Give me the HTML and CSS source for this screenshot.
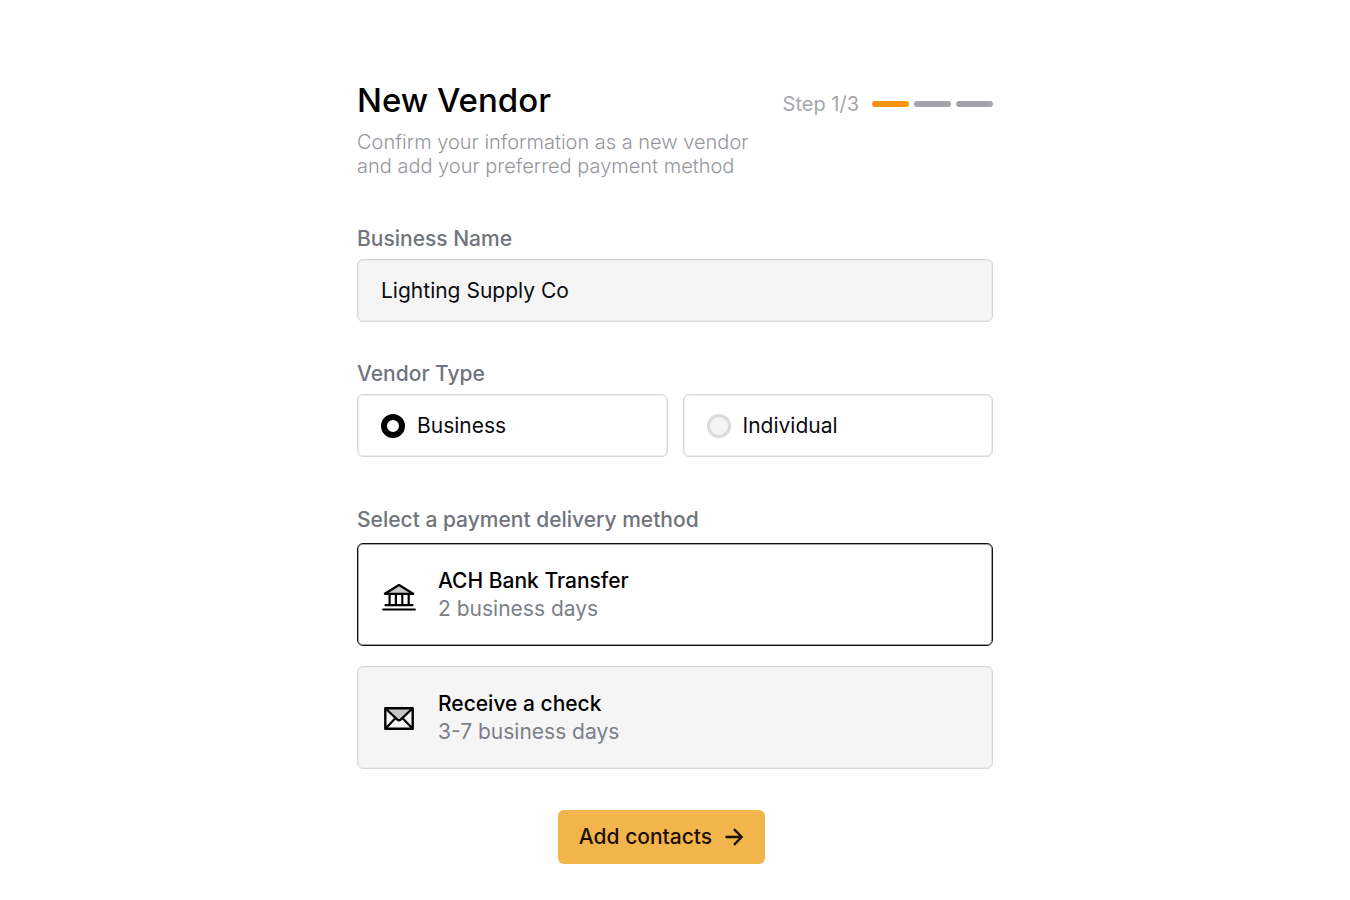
FILE: index.html
```html
<!DOCTYPE html>
<html lang="en">
<head>
<meta charset="utf-8">
<meta name="viewport" content="width=device-width, initial-scale=1">
<title>New Vendor</title>
<link rel="stylesheet" href="styles.css">
</head>
<body>
<main class="page">
  <form class="form">
    <header class="header">
      <div class="intro">
        <h1 class="title">New Vendor</h1>
        <p class="subtitle">Confirm your information as a new vendor<br>and add your preferred payment method</p>
      </div>
      <div class="progress">
        <span class="step-text">Step 1/3</span>
        <div class="bars">
          <span class="bar bar-active"></span>
          <span class="bar"></span>
          <span class="bar"></span>
        </div>
      </div>
    </header>

    <div class="field">
      <label class="label" for="business-name">Business Name</label>
      <input class="text-input" id="business-name" type="text" value="Lighting Supply Co">
    </div>

    <fieldset class="field">
      <legend class="label">Vendor Type</legend>
      <div class="choices">
        <label class="choice" for="type-business">
          <input class="radio" id="type-business" type="radio" name="vendor-type" checked>
          <span>Business</span>
        </label>
        <label class="choice" for="type-individual">
          <input class="radio" id="type-individual" type="radio" name="vendor-type">
          <span>Individual</span>
        </label>
      </div>
    </fieldset>

    <fieldset class="field field-methods">
      <legend class="label">Select a payment delivery method</legend>
      <div class="methods">
        <label class="method" for="method-ach">
          <input class="method-radio" id="method-ach" type="radio" name="method" checked>
          <svg class="method-icon" viewBox="0 0 34 34" aria-hidden="true">
            <path d="M3 15.500 17 7l14 8.500z" fill="#c9c9ca"/>
            <path d="M2.800 15.800 17 7l14.200 8.800zM7.600 15.800V27.200M13.900 15.800V27.200M20.300 15.800V27.200M26.700 15.800V27.200M3.500 27.200h27" fill="none" stroke="#000" stroke-width="2.200" stroke-linecap="round" stroke-linejoin="round"/>
            <path d="M1.200 31.500h31.600" fill="none" stroke="#000" stroke-width="2.200" stroke-linecap="round"/>
          </svg>
          <span class="method-text">
            <span class="method-name">ACH Bank Transfer</span>
            <span class="method-time">2 business days</span>
          </span>
        </label>
        <label class="method" for="method-check">
          <input class="method-radio" id="method-check" type="radio" name="method">
          <svg class="method-icon" viewBox="0 0 34 34" aria-hidden="true">
            <path d="M3.500 7h27L17 18.500z" fill="#c6c6c7"/>
            <path d="M3.300 7.200h27.400v20.600H3.300z" fill="none" stroke="#000" stroke-width="2.400" stroke-linejoin="round"/>
            <path d="m3.800 7.800 11.600 10.800q1.600 1.300 3.200 0l11.600-10.800M3.800 27.300l10-10.500M30.200 27.300l-10-10.500" fill="none" stroke="#000" stroke-width="2.200"/>
          </svg>
          <span class="method-text">
            <span class="method-name">Receive a check</span>
            <span class="method-time">3-7 business days</span>
          </span>
        </label>
      </div>
    </fieldset>

    <div class="actions">
      <button class="submit" type="button">
        <span>Add contacts</span>
        <svg class="arrow" viewBox="0 0 20 20" aria-hidden="true">
          <path d="M2.500 10h15M10.700 2.800l7 7.200-7 7.200" fill="none" stroke="#1c1002" stroke-width="2.400" stroke-linecap="round" stroke-linejoin="round"/>
        </svg>
      </button>
    </div>
  </form>
</main>
</body>
</html>
```

FILE: styles.css
```css
* {
  box-sizing: border-box;
}

body {
  margin: 0;
  background: #fff;
  color: #0b0c10;
  font-family: Inter, "Liberation Sans", sans-serif;
  font-size: 21px;
  line-height: 28px;
}

.page {
  padding: 80px 24px 32px;
}

.form {
  max-width: 636px;
  margin: 0 auto;
}

.header {
  display: flex;
  justify-content: space-between;
  align-items: flex-start;
  gap: 24px;
  margin-bottom: 47px;
}

.title {
  margin: 0 0 10px;
  color: #000;
  font-size: 33px;
  font-weight: 500;
  line-height: 40px;
}

.subtitle {
  margin: 0;
  color: #96989d;
  font-size: 20px;
  font-weight: 300;
  line-height: 24px;
}

.progress {
  display: flex;
  align-items: center;
  gap: 13px;
  padding-top: 10px;
}

.step-text {
  color: #a6a7ac;
  font-size: 20px;
}

.bars {
  display: flex;
  gap: 5px;
}

.bar {
  width: 37px;
  height: 6px;
  border-radius: 3px;
  background: #a3a5aa;
}

.bar-active {
  background: #f5920f;
}

.field {
  min-width: 0;
  margin: 0 0 38px;
  padding: 0;
  border: 0;
}

.label {
  display: block;
  padding: 0;
  margin-bottom: 6px;
  color: #70747d;
  font-weight: 500;
}

.text-input,
.choice,
.method {
  border: 1px solid #d6d7d9;
  border-radius: 6px;
  box-shadow: inset 0 0 0 1px #ececed;
}

.text-input {
  display: block;
  width: 100%;
  height: 63px;
  padding: 0 23px;
  background: #f5f5f5;
  color: inherit;
  font: inherit;
}

.choices {
  display: grid;
  grid-template-columns: 1fr 1fr;
  gap: 15px;
}

.choice {
  display: flex;
  align-items: center;
  gap: 12px;
  min-height: 63px;
  padding: 0 23px;
}

.radio {
  appearance: none;
  flex: none;
  width: 24px;
  height: 24px;
  margin: 0;
  border: 3px solid #d9dadc;
  border-radius: 50%;
  background: #f4f4f5;
}

.radio:checked {
  border: 6px solid #000;
  background: #fff;
}

.field-methods {
  margin: 49px 0 41px;
}

.field-methods .label {
  margin-bottom: 9px;
}

.methods {
  display: grid;
  gap: 20px;
}

.method {
  display: flex;
  align-items: center;
  gap: 22px;
  min-height: 103px;
  padding: 20px 24px;
  background: #f5f5f5;
}

.method:has(:checked) {
  border-color: #111214;
  box-shadow: inset 0 0 0 1px #a0a0a2;
  background: #fff;
}

.method-radio {
  appearance: none;
  position: absolute;
  margin: 0;
}

.method-icon {
  flex: none;
  width: 34px;
  height: 34px;
}

.method-text {
  display: grid;
}

.method-name {
  color: #000;
  font-weight: 500;
}

.method-time {
  color: #7b7f88;
}

.actions {
  display: flex;
  justify-content: center;
  padding-right: 27px;
}

.submit {
  display: flex;
  align-items: center;
  gap: 12px;
  min-height: 54px;
  padding: 0 21px;
  border: 0;
  border-radius: 6px;
  background: #f2b54b;
  color: #1c1002;
  font: inherit;
  font-weight: 500;
}

.arrow {
  width: 20px;
  height: 20px;
}
```
